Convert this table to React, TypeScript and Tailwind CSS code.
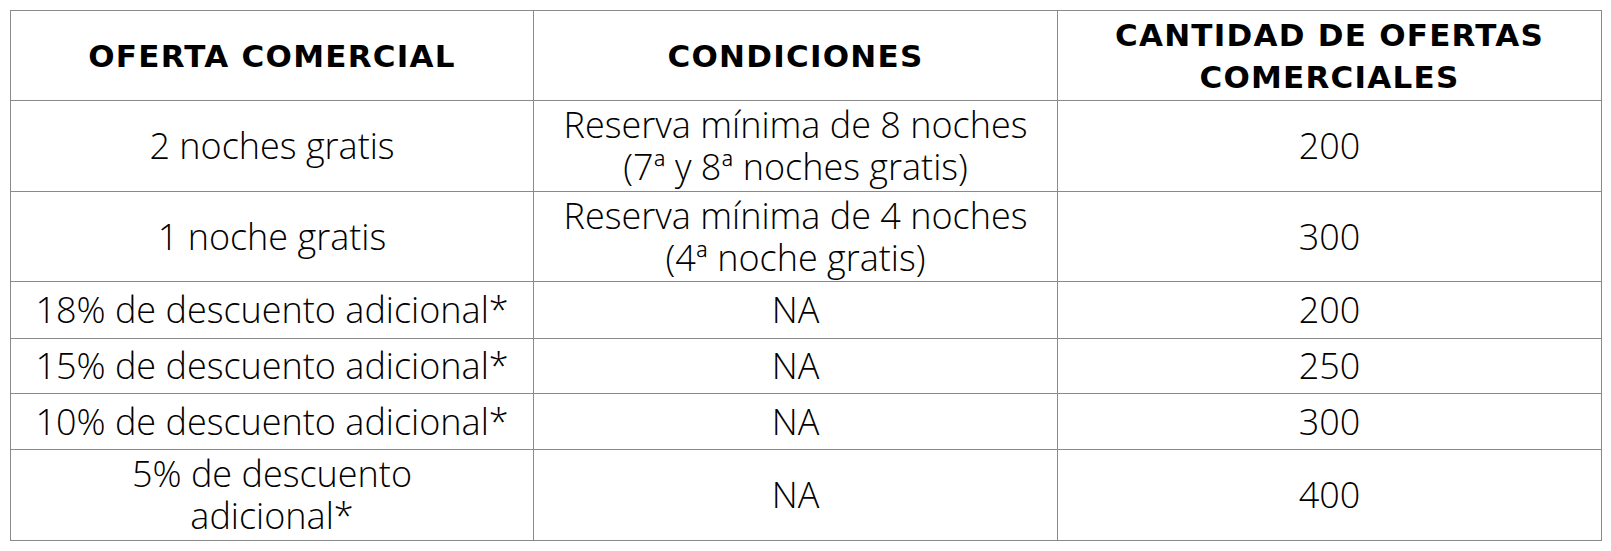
const rows: { oferta: string[]; condiciones: string[]; cantidad: string; h: string }[] = [
  { oferta: ["2 noches gratis"], condiciones: ["Reserva mínima de 8 noches", "(7ª y 8ª noches gratis)"], cantidad: "200", h: "h-[91px]" },
  { oferta: ["1 noche gratis"], condiciones: ["Reserva mínima de 4 noches", "(4ª noche gratis)"], cantidad: "300", h: "h-[90px]" },
  { oferta: ["18% de descuento adicional*"], condiciones: ["NA"], cantidad: "200", h: "h-[57px]" },
  { oferta: ["15% de descuento adicional*"], condiciones: ["NA"], cantidad: "250", h: "h-[55px]" },
  { oferta: ["10% de descuento adicional*"], condiciones: ["NA"], cantidad: "300", h: "h-[56px]" },
  { oferta: ["5% de descuento", "adicional*"], condiciones: ["NA"], cantidad: "400", h: "h-[91px]" },
];

function Lines({ lines }: { lines: string[] }) {
  return (
    <>
      {lines.map((l) => (
        <div key={l}>{l}</div>
      ))}
    </>
  );
}

const th =
  "border border-[#8a8a8a] font-['DejaVu_Sans','Open_Sans',sans-serif] text-[31px] font-bold tracking-[0.04em] leading-[42px] align-middle p-0";
const td = "border border-[#8a8a8a] text-center text-[36px] font-light leading-[42px] p-0 align-middle";

export default function App() {
  return (
    <div className="bg-white w-[1611px] h-[551px] pt-[10px] pl-[10px] font-['Open_Sans','Liberation_Sans',sans-serif] text-black">
      <table className="border-collapse table-fixed w-[1591px]">
        <colgroup>
          <col className="w-[523px]" />
          <col className="w-[524px]" />
          <col className="w-[544px]" />
        </colgroup>
        <thead>
          <tr className="h-[90px]">
            <th className={th}>OFERTA COMERCIAL</th>
            <th className={th}>CONDICIONES</th>
            <th className={th}>
              CANTIDAD DE OFERTAS
              <br />
              COMERCIALES
            </th>
          </tr>
        </thead>
        <tbody>
          {rows.map((r) => (
            <tr key={r.oferta.join(" ")} className={r.h}>
              <td className={td}>
                <Lines lines={r.oferta} />
              </td>
              <td className={td}>
                <Lines lines={r.condiciones} />
              </td>
              <td className={td}>{r.cantidad}</td>
            </tr>
          ))}
        </tbody>
      </table>
    </div>
  );
}
